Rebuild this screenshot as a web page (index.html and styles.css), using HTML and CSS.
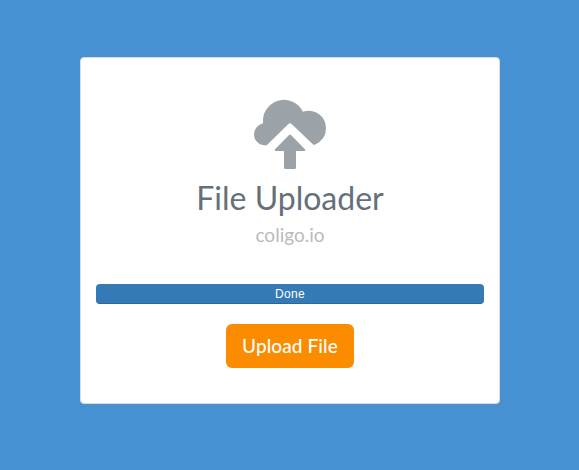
FILE: index.html
```html
<!DOCTYPE html>
<html lang="en">
<head>
<meta charset="utf-8">
<title>File Uploader</title>
<link rel="stylesheet" href="styles.css">
</head>
<body>
<main class="panel">
  <svg class="icon" viewBox="0 0 100 90" aria-hidden="true">
    <path d="M27 55L48.4 34Q50 32.3 51.6 34L72.8 54.3Q73.8 55.3 75.3 54.4A17 17 0 0 0 86 38.4A17.2 17.2 0 0 0 62.9 21.8A21 21 0 0 0 23.1 33.3A11.5 11.5 0 0 0 14 44.4A11 11 0 0 0 25 55.3Q26.3 55.7 27 55Z"/>
    <path d="M48.8 45.2Q50 44 51.2 45.2L65 59.3Q66 61 64.5 61H56V77.5Q56 79 54.5 79H45.5Q44 79 44 77.5V61H35.5Q34 61 35 59.3Z"/>
  </svg>
  <h1 class="title">File Uploader</h1>
  <h2 class="subtitle">coligo.io</h2>
  <div class="progress"><div class="progress-bar">Done</div></div>
  <button class="upload" type="button">Upload File</button>
</main>
</body>
</html>
```
FILE: styles.css
```css
* { box-sizing: border-box; }
body {
  margin: 0;
  padding: 57px 79px 0 80px;
  background: #4791d2;
  font-family: Lato, sans-serif;
}
.panel {
  display: flex;
  flex-direction: column;
  align-items: center;
  height: 347px;
  padding: 32px 15px 0;
  background: #fff;
  border: 1px solid #d5dbe0;
  border-radius: 4px;
}
.icon {
  width: 100px;
  height: 90px;
  fill: #9ca3a8;
}
.title {
  margin: 0;
  height: 36px;
  font-size: 32px;
  font-weight: 400;
  line-height: 35px;
  color: #64707a;
}
.subtitle {
  margin: 8px 0 0;
  font-size: 19px;
  font-weight: 400;
  line-height: 21px;
  height: 20px;
  color: #b8bbbd;
}
.progress {
  width: 100%;
  height: 20px;
  margin-top: 40px;
}
.progress-bar {
  height: 20px;
  border-radius: 4px;
  background: #337ab7;
  box-shadow: inset 0 -1px 0 rgba(0, 0, 0, 0.15);
  color: #fff;
  font: 12px/20px "Liberation Sans", sans-serif;
  letter-spacing: 0.3px;
  text-align: center;
}
.upload {
  width: 128px;
  height: 44px;
  margin-top: 20px;
  padding: 0 0 1px;
  border: 0;
  border-radius: 6px;
  background: #fb8c00;
  color: #fff;
  font: 500 19px/43px Lato, sans-serif;
  letter-spacing: 0.1px;
}
```
